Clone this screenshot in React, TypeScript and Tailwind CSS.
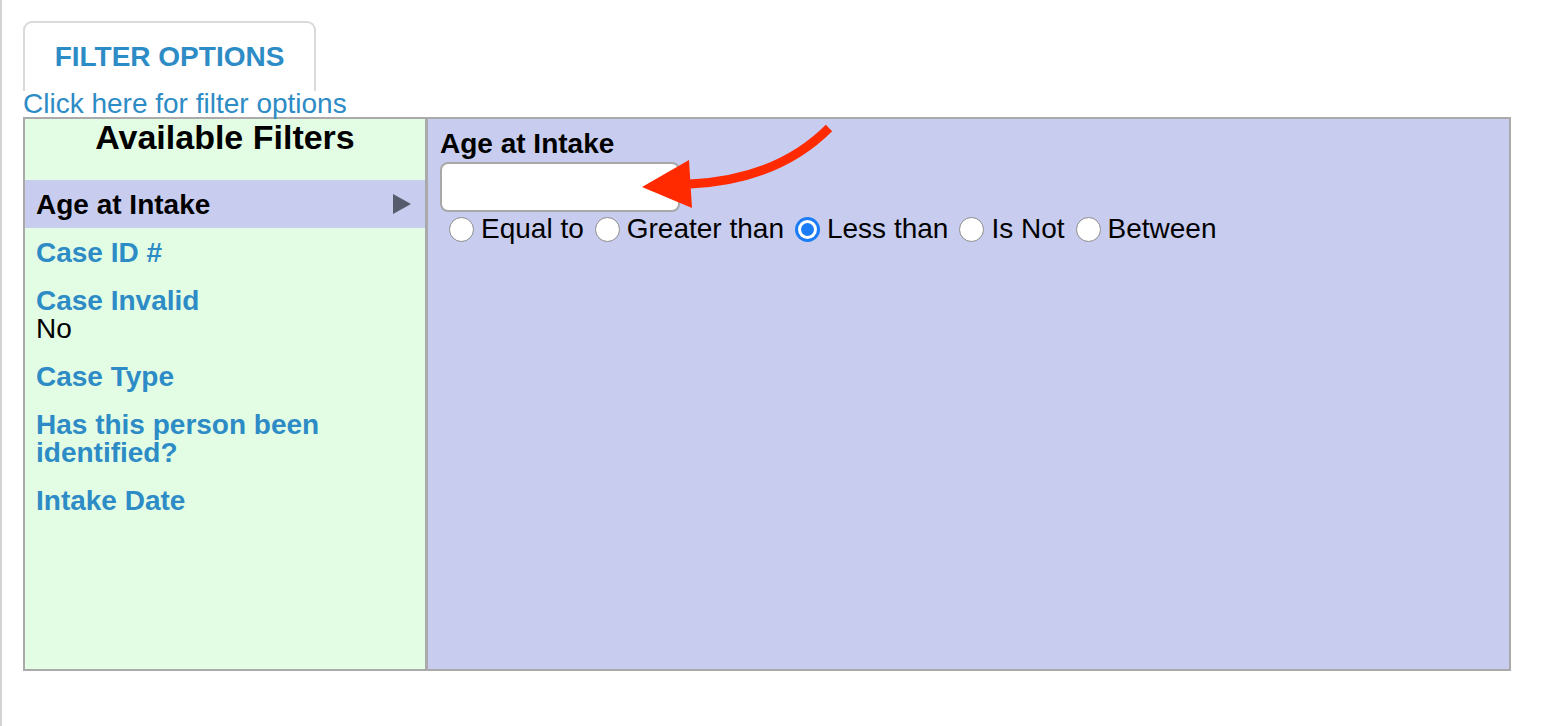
import React, { useState } from 'react';

const filters = [
  { label: 'Age at Intake', value: '', selected: true },
  { label: 'Case ID #', value: '' },
  { label: 'Case Invalid', value: 'No' },
  { label: 'Case Type', value: '' },
  { label: 'Has this person been identified?', value: '' },
  { label: 'Intake Date', value: '' },
];

const options = ['Equal to', 'Greater than', 'Less than', 'Is Not', 'Between'];

const Radio = ({ checked }: { checked: boolean }) =>
  checked ? (
    <span className="w-[25px] h-[25px] rounded-full bg-[#1a7cf6] flex items-center justify-center shrink-0">
      <span className="w-[19px] h-[19px] rounded-full bg-white flex items-center justify-center">
        <span className="w-[13px] h-[13px] rounded-full bg-[#1a7cf6]" />
      </span>
    </span>
  ) : (
    <span className="w-[25px] h-[25px] rounded-full bg-white border-[1.5px] border-[#8c8c8c] shrink-0" />
  );

export default function App() {
  const [choice, setChoice] = useState('Less than');

  return (
    <div
      className="relative min-h-screen bg-white border-l-2 border-[#d3d3d3] pl-[21px] pr-[37px] pt-[21px]"
      style={{ fontFamily: '"Liberation Sans", Arial, Helvetica, sans-serif' }}
    >
      {/* tab */}
      <div className="w-[293px] h-[70px] border-2 border-b-0 border-[#dadada] rounded-t-[9px] flex items-center justify-center">
        <span className="text-[28px] font-bold text-[#2d8bc5] leading-none">FILTER OPTIONS</span>
      </div>
      <div className="text-[28px] leading-[26px] text-[#2d8bc5] bg-white w-fit">
        Click here for filter options
      </div>

      {/* filter box */}
      <div className="w-[1488px] h-[554px] border-2 border-[#aaaaaa] flex">
        <div className="w-[403px] bg-[#e3fde5] border-r-[3px] border-[#aaaaaa] flex flex-col">
          <div className="h-[61px] text-center text-[34px] leading-[36px] font-bold text-black">
            Available Filters
          </div>
          {filters.map((f) => (
            <div
              key={f.label}
              className={`flex items-start justify-between pl-[11px] pr-[14px] pt-[11px] pb-[9px] ${
                f.selected ? 'bg-[#c8cdef]' : ''
              }`}
            >
              <div className="text-[28px] leading-[28px]">
                <div className={`font-bold ${f.selected ? 'text-black' : 'text-[#2d8bc5]'}`}>{f.label}</div>
                {f.value && <div className="text-black">{f.value}</div>}
              </div>
              {f.selected && (
                <svg width="18" height="20" viewBox="0 0 18 20" className="mt-[3px] shrink-0">
                  <polygon points="0,0 18,10 0,20" fill="#575b6e" />
                </svg>
              )}
            </div>
          ))}
        </div>

        <div className="flex-1 bg-[#c8cdef] pl-[12px] pt-[11px]">
          <div className="text-[28px] leading-[28px] font-bold text-black">Age at Intake</div>
          <input
            type="text"
            className="mt-[4px] w-[240px] h-[50px] bg-white border-2 border-[#a8a8a8] rounded-[8px] outline-none px-2 text-[24px]"
          />
          <div className="mt-[3px] flex items-center pl-[9px] text-[28px] leading-[28px] text-black">
            {options.map((o) => (
              <label key={o} className="flex items-center gap-[7px] mr-[11px] cursor-pointer" onClick={() => setChoice(o)}>
                <Radio checked={choice === o} />
                <span>{o}</span>
              </label>
            ))}
          </div>
        </div>
      </div>

      {/* annotation arrow */}
      <svg className="absolute left-0 top-0 pointer-events-none" width="1550" height="726">
        <path d="M827 128 Q775 180 688 184" fill="none" stroke="#ff2a00" strokeWidth="9" />
        <polygon points="640,187 687,160 690,208" fill="#ff2a00" />
      </svg>
    </div>
  );
}
